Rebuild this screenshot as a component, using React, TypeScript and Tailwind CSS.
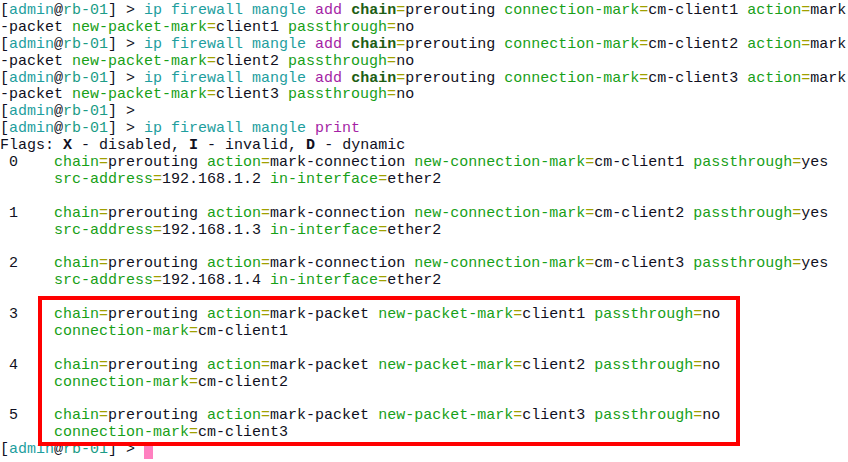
import React from 'react';

type Seg = [string, string];

const T = 'text-[#1e9e9e]';
const RB = 'text-[#1c9c86]';
const M = 'text-[#a51fa5]';
const K = 'text-[#18a018]';
const E = 'text-[#a0a000]';
const V = 'text-[#101022]';
const B = 'text-[#1d5e14] font-bold';

const prompt: Seg[] = [
  ['[', V],
  ['admin', T],
  ['@', V],
  ['rb-01', RB],
  ['] > ', V],
];

const kv = (k: string, v: string, sep = ' '): Seg[] => [
  [k, K],
  ['=', E],
  [v + sep, V],
];

const addCmd = (n: number): Seg[][] => [
  [
    ...prompt,
    ['ip firewall mangle ', T],
    ['add ', M],
    ['chain', B],
    ['=', E],
    ['prerouting ', V],
    ...kv('connection-mark', `cm-client${n}`),
    ...kv('action', 'mark', ''),
  ],
  [['-packet ', V], ...kv('new-packet-mark', `client${n}`), ...kv('passthrough', 'no', '')],
];

const connRule = (i: number): Seg[][] => [
  [
    [` ${i}    `, V],
    ...kv('chain', 'prerouting'),
    ...kv('action', 'mark-connection'),
    ...kv('new-connection-mark', `cm-client${i + 1}`),
    ...kv('passthrough', 'yes', ''),
  ],
  [['      ', V], ...kv('src-address', `192.168.1.${i + 2}`), ...kv('in-interface', 'ether2', '')],
  [],
];

const packetRule = (i: number, last: boolean): Seg[][] => {
  const rows: Seg[][] = [
    [
      [` ${i}    `, V],
      ...kv('chain', 'prerouting'),
      ...kv('action', 'mark-packet'),
      ...kv('new-packet-mark', `client${i - 2}`),
      ...kv('passthrough', 'no', ''),
    ],
    [['      ', V], ...kv('connection-mark', `cm-client${i - 2}`, '')],
  ];
  if (!last) rows.push([]);
  return rows;
};

const lines: Seg[][] = [
  ...addCmd(1),
  ...addCmd(2),
  ...addCmd(3),
  [...prompt],
  [...prompt, ['ip firewall mangle ', T], ['print', M]],
  [
    ['Flags: ', V],
    ['X', V + ' font-bold'],
    [' - disabled, ', V],
    ['I', V + ' font-bold'],
    [' - invalid, ', V],
    ['D', V + ' font-bold'],
    [' - dynamic', V],
  ],
  ...connRule(0),
  ...connRule(1),
  ...connRule(2),
  ...packetRule(3, false),
  ...packetRule(4, false),
  ...packetRule(5, true),
];

export default function App() {
  return (
    <div className="relative w-[848px] h-[462px] overflow-hidden bg-white">
      <div
        className="pt-[3px] text-[15px] leading-[16.9px] whitespace-pre"
        style={{ fontFamily: '"Liberation Mono", "Courier New", monospace' }}
      >
        {lines.map((segs, i) => (
          <div key={i} className="h-[16.9px]">
            {segs.map(([t, c], j) => (
              <span key={j} className={c}>
                {t}
              </span>
            ))}
          </div>
        ))}
        <div className="h-[16.9px] flex items-center">
          {prompt.map(([t, c], j) => (
            <span key={j} className={c}>
              {t}
            </span>
          ))}
          <span className="inline-block w-[9px] h-[16px] bg-[#ff80c0]" />
        </div>
      </div>

      {/* red highlight over the mark-packet rules */}
      <div className="absolute left-[38px] top-[296px] w-[702px] h-[150px] border-4 border-[#ff0000]" />
    </div>
  );
}
